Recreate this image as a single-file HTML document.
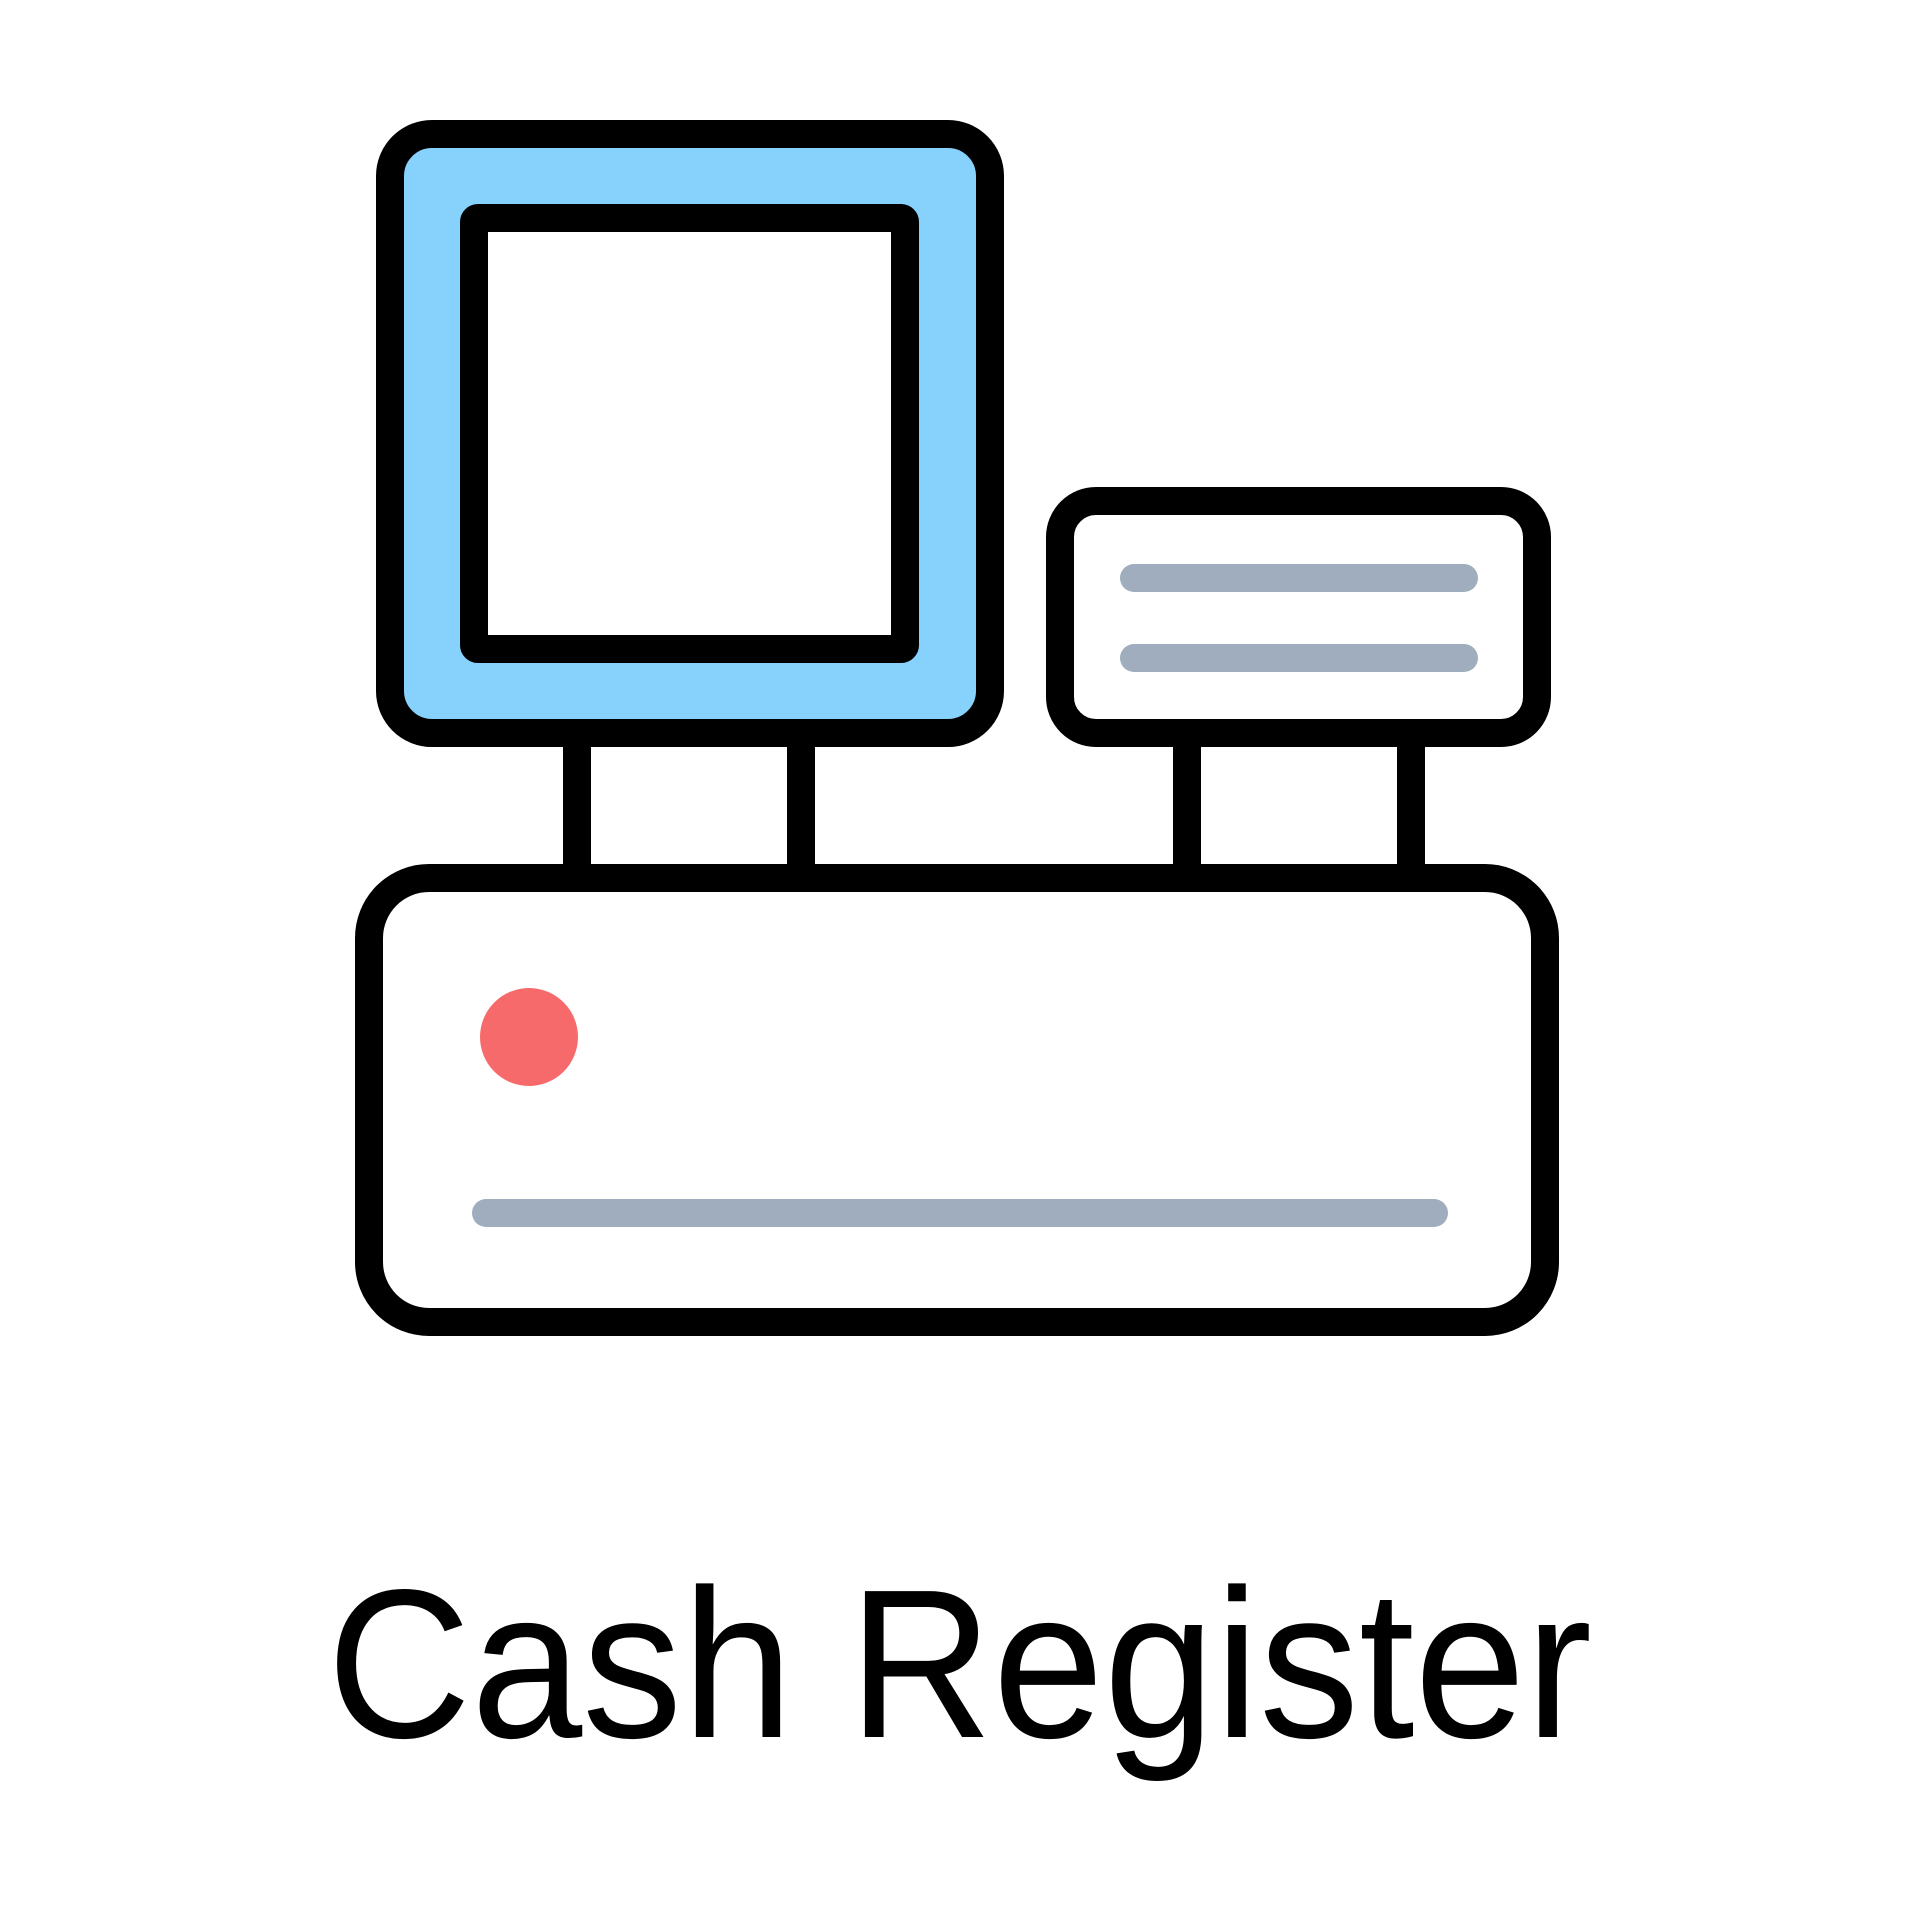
<!DOCTYPE html>
<html><head><meta charset="utf-8"><style>html,body{margin:0;padding:0;background:#fff}svg{display:block}</style></head>
<body>
<svg width="1920" height="1920" viewBox="0 0 1920 1920" xmlns="http://www.w3.org/2000/svg">
<g fill="none" stroke="#000" stroke-width="28" stroke-linejoin="round">
<rect x="390" y="134" width="600" height="599" rx="42" fill="#87d1fd"/>
<rect x="474" y="218" width="431" height="431" rx="4" fill="#fff"/>
<rect x="577" y="733" width="224" height="145" fill="#fff"/>
<rect x="1060" y="501" width="477" height="232" rx="36" fill="#fff"/>
<rect x="1187" y="733" width="224" height="145" fill="#fff"/>
<rect x="369" y="878" width="1176" height="444" rx="60" fill="#fff"/>
</g>
<g stroke="#a0adbe" stroke-width="28" stroke-linecap="round">
<line x1="1134" y1="578" x2="1464" y2="578"/>
<line x1="1134" y1="658" x2="1464" y2="658"/>
<line x1="486" y1="1213" x2="1434" y2="1213"/>
</g>
<circle cx="529" cy="1037" r="49" fill="#f76a6b"/>
<text x="327" y="1737" font-family="Liberation Sans, sans-serif" font-size="212" textLength="1265" lengthAdjust="spacingAndGlyphs" fill="#000">Cash Register</text>
</svg>
</body></html>
